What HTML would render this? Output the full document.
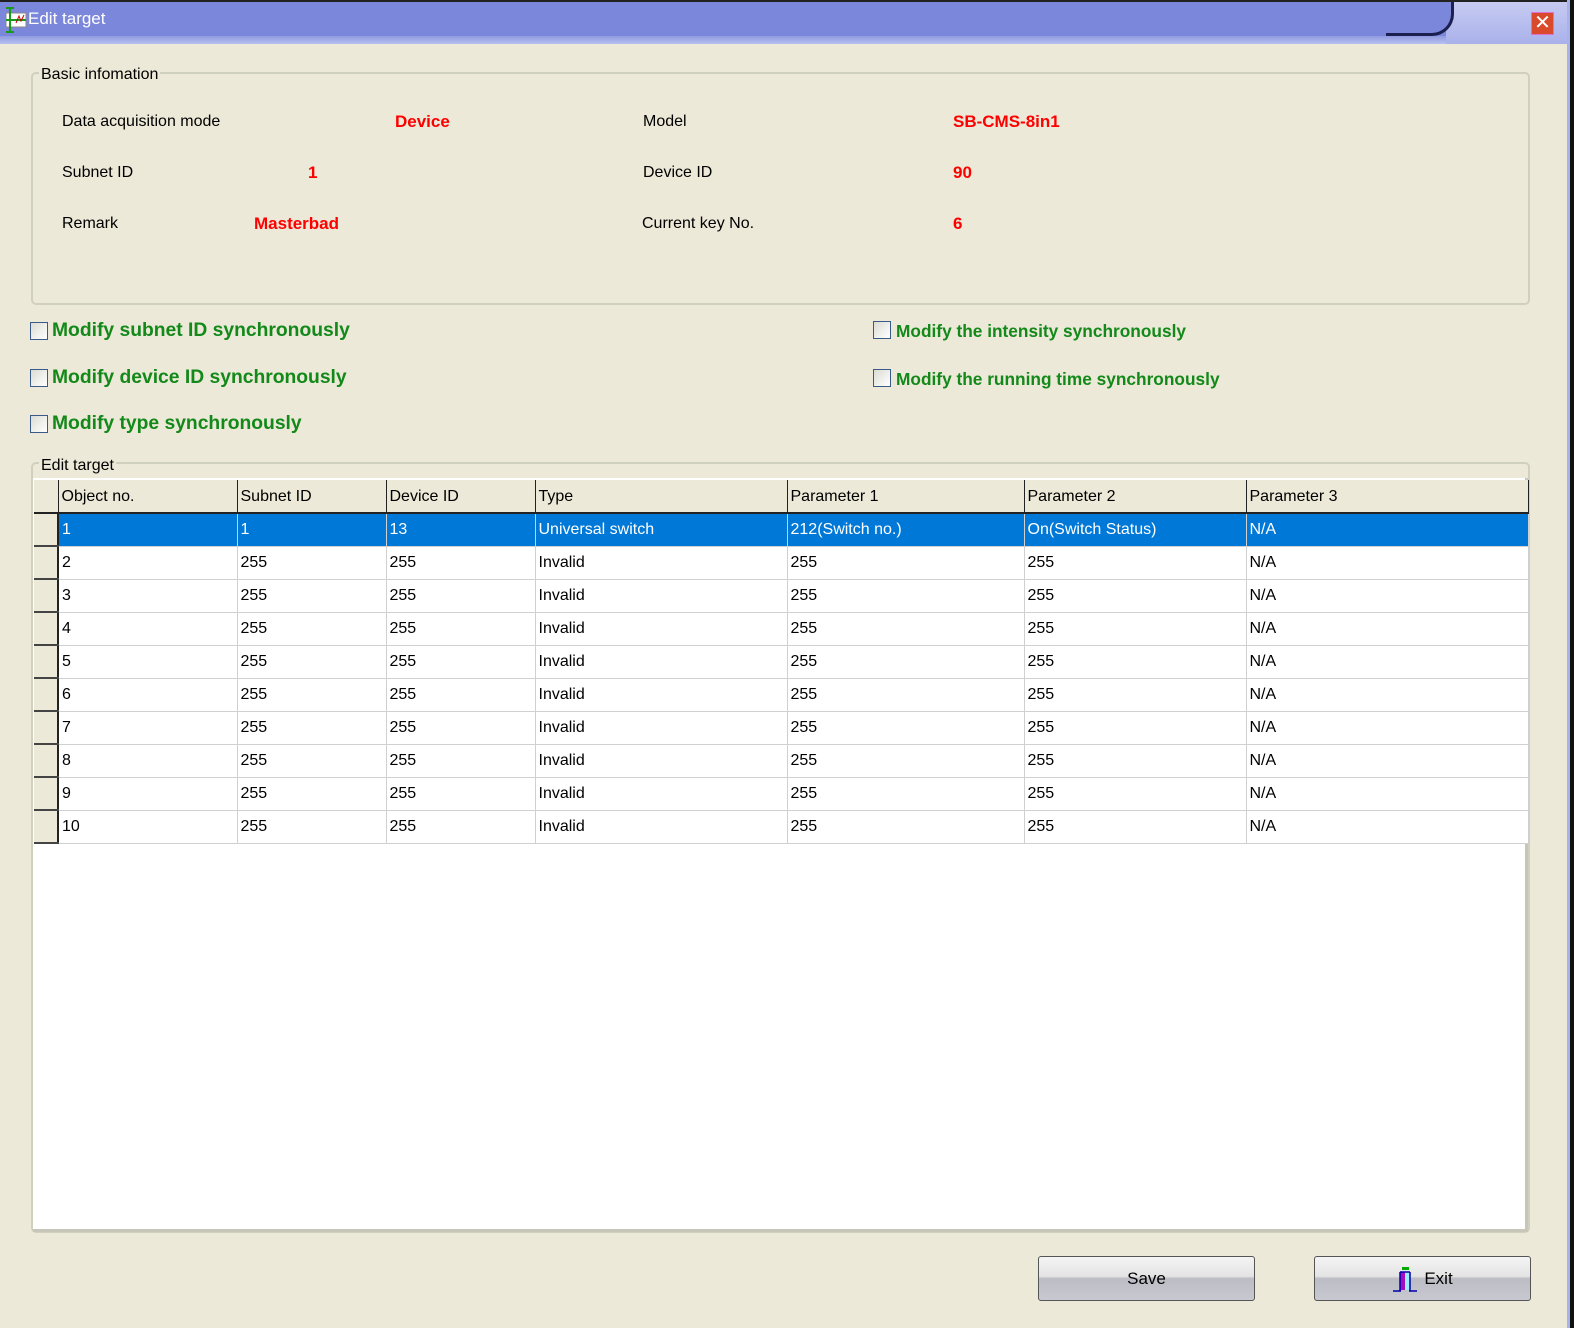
<!DOCTYPE html>
<html><head><style>
*{margin:0;padding:0;box-sizing:border-box}
body{width:1574px;height:1328px;background:#ece9d8;position:relative;overflow:hidden;font-family:"Liberation Sans",sans-serif;font-size:16px;color:#000}
.a{position:absolute;white-space:nowrap}
.red{color:#f00;font-weight:bold;font-size:17px}
.grn{color:#13891a;font-weight:bold}
.cb{position:absolute;width:18px;height:18px;border:1px solid #3a5a8a;background:linear-gradient(135deg,#dcdcd4,#fff)}
table{border-collapse:collapse;position:absolute;left:34px;top:480px;table-layout:fixed}
td{height:33px;border-right:1px solid #d0d0d0;border-bottom:1px solid #d0d0d0;padding:1px 0 0 3px;font-size:16px;white-space:nowrap;background:#fff}
tr.h td{background:#ece9d8;border-right:1px solid #222;border-bottom:2px solid #222;height:33px}
td.rh{background:#ece9d8;border-right:2px solid #222;border-bottom:2px solid #444;padding:0}
tr.s td{background:#0078d7;color:#fff}
tr.s td.rh{background:#ece9d8}
.btn{position:absolute;top:1256px;width:217px;height:45px;border:1px solid #555;border-radius:3px;background:linear-gradient(#f4f4f4,#e4e4e4 45%,#bcbcc4 50%,#c8c8d0);font-size:17px;text-align:center;line-height:43px}
</style></head><body>
<div class="a" style="left:0;top:0;width:1574px;height:37px;background:#7b87da"></div>
<div class="a" style="left:1446px;top:0;width:121px;height:44px;background:linear-gradient(#c8ccf2,#a9b1ea)"></div>
<div class="a" style="left:1386px;top:0;width:68px;height:36px;background:#7b87da;border-right:3px solid #1c2050;border-bottom:3px solid #1c2050;border-bottom-right-radius:22px"></div>
<div class="a" style="left:0;top:36px;width:1446px;height:8px;background:linear-gradient(#8f9ae0,#b8c0f0)"></div>
<div class="a" style="left:0;top:0;width:1574px;height:2px;background:#222"></div>
<div class="a" style="left:1531px;top:12px;width:23px;height:23px;background:#d94a2c;border:1px solid #e070d0;color:#fff;font-size:20px;line-height:21px;text-align:center">✕</div>
<div class="a" style="left:1567px;top:0;width:3px;height:1328px;background:#a9b1ea"></div>
<div class="a" style="left:1570px;top:0;width:4px;height:1328px;background:#111"></div>
<svg class="a" style="left:4px;top:7px" width="24" height="26" viewBox="0 0 24 26"><rect x="2" y="6" width="20" height="14" fill="#fff" stroke="#888"/><path d="M6 1V25M2 1H10M2 25H10M2 13H22" stroke="#1a9a1a" stroke-width="2"/><path d="M12 16L15 9L17 14L20 8" stroke="#c00" fill="none"/></svg>
<div class="a" style="left:28px;top:9px;color:#fff;font-size:17px">Edit target</div>

<div class="a" style="left:31px;top:72px;width:1499px;height:233px;border:2px solid #d0d0bf;border-radius:5px"></div>
<div class="a" style="left:39px;top:66px;background:#ece9d8;padding:0 2px">Basic infomation</div>
<div class="a" style="left:62px;top:113px">Data acquisition mode</div>
<div class="a red" style="left:395px;top:112px">Device</div>
<div class="a" style="left:643px;top:113px">Model</div>
<div class="a red" style="left:953px;top:112px">SB-CMS-8in1</div>
<div class="a" style="left:62px;top:164px">Subnet ID</div>
<div class="a red" style="left:308px;top:163px">1</div>
<div class="a" style="left:643px;top:164px">Device ID</div>
<div class="a red" style="left:953px;top:163px">90</div>
<div class="a" style="left:62px;top:215px">Remark</div>
<div class="a red" style="left:254px;top:214px">Masterbad</div>
<div class="a" style="left:642px;top:215px">Current key No.</div>
<div class="a red" style="left:953px;top:214px">6</div>

<div class="cb" style="left:30px;top:322px"></div><div class="a grn" style="left:52px;top:320px;font-size:19.3px">Modify subnet ID synchronously</div>
<div class="cb" style="left:30px;top:369px"></div><div class="a grn" style="left:52px;top:367px;font-size:19.3px">Modify device ID synchronously</div>
<div class="cb" style="left:30px;top:415px"></div><div class="a grn" style="left:52px;top:413px;font-size:19.3px">Modify type synchronously</div>
<div class="cb" style="left:873px;top:321px"></div><div class="a grn" style="left:896px;top:321px;font-size:17.3px">Modify the intensity synchronously</div>
<div class="cb" style="left:873px;top:369px"></div><div class="a grn" style="left:896px;top:369px;font-size:17.3px">Modify the running time synchronously</div>

<div class="a" style="left:31px;top:462px;width:1499px;height:771px;border:2px solid #d0d0bf;border-radius:5px"></div>
<div class="a" style="left:33px;top:478px;width:1495px;height:754px;background:#fff;border-right:3px solid #c8c6b8;border-bottom:3px solid #c8c6b8"></div>
<div class="a" style="left:39px;top:457px;background:#ece9d8;padding:0 2px">Edit target</div>

<table>
<colgroup><col style="width:24px"><col style="width:179px"><col style="width:149px"><col style="width:149px"><col style="width:252px"><col style="width:237px"><col style="width:222px"><col style="width:282px"></colgroup>
<tr class="h"><td class="rh"></td><td>Object no.</td><td>Subnet ID</td><td>Device ID</td><td>Type</td><td>Parameter 1</td><td>Parameter 2</td><td>Parameter 3</td></tr>
<tr class="s"><td class="rh"></td><td>1</td><td>1</td><td>13</td><td>Universal switch</td><td>212(Switch no.)</td><td>On(Switch Status)</td><td>N/A</td></tr>
<tr><td class="rh"></td><td>2</td><td>255</td><td>255</td><td>Invalid</td><td>255</td><td>255</td><td>N/A</td></tr>
<tr><td class="rh"></td><td>3</td><td>255</td><td>255</td><td>Invalid</td><td>255</td><td>255</td><td>N/A</td></tr>
<tr><td class="rh"></td><td>4</td><td>255</td><td>255</td><td>Invalid</td><td>255</td><td>255</td><td>N/A</td></tr>
<tr><td class="rh"></td><td>5</td><td>255</td><td>255</td><td>Invalid</td><td>255</td><td>255</td><td>N/A</td></tr>
<tr><td class="rh"></td><td>6</td><td>255</td><td>255</td><td>Invalid</td><td>255</td><td>255</td><td>N/A</td></tr>
<tr><td class="rh"></td><td>7</td><td>255</td><td>255</td><td>Invalid</td><td>255</td><td>255</td><td>N/A</td></tr>
<tr><td class="rh"></td><td>8</td><td>255</td><td>255</td><td>Invalid</td><td>255</td><td>255</td><td>N/A</td></tr>
<tr><td class="rh"></td><td>9</td><td>255</td><td>255</td><td>Invalid</td><td>255</td><td>255</td><td>N/A</td></tr>
<tr><td class="rh"></td><td>10</td><td>255</td><td>255</td><td>Invalid</td><td>255</td><td>255</td><td>N/A</td></tr>
</table>

<div class="btn" style="left:1038px">Save</div>
<div class="btn" style="left:1314px"><svg width="26" height="28" viewBox="0 0 26 28" style="vertical-align:middle;margin-right:6px"><rect x="10" y="1" width="7" height="3" fill="#0a0"/><rect x="8" y="6" width="5" height="18" fill="#a010c0"/><rect x="13" y="6" width="5" height="18" fill="#9ef"/><path d="M1 25H9M17 25H25M8 6V25M18 6V25M8 6H18" stroke="#00a" stroke-width="1.5" fill="none"/></svg>Exit</div>
</body></html>
